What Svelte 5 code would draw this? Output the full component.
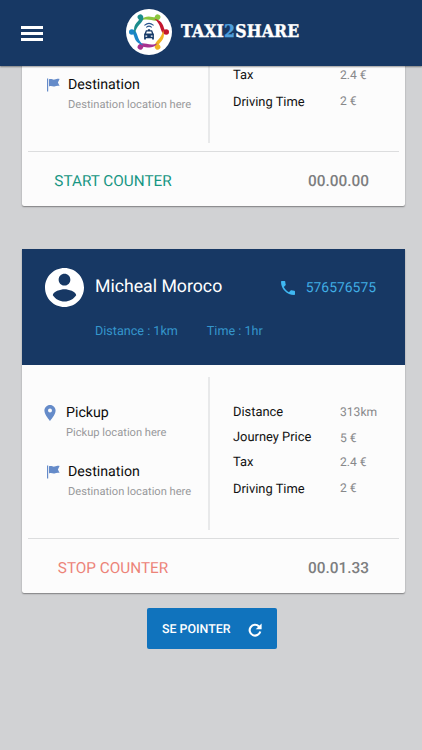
<script>
    const trips = [
        { id: 1, name: 'Micheal Moroco', phone: '576576575', running: false, counter: '00.00.00' },
        { id: 2, name: 'Micheal Moroco', phone: '576576575', running: true, counter: '00.01.33' },
    ];

    const prices = [
        { label: 'Distance', value: '313km' },
        { label: 'Journey Price', value: '5 €' },
        { label: 'Tax', value: '2.4 €' },
        { label: 'Driving Time', value: '2 €' },
    ];

    // one little figure of the logo ring per colour
    const people = ['#8cc63f', '#c4162e', '#f0b323', '#a8328f', '#1b86c8', '#1c8c8c'];
</script>

<div class="screen">
    <header class="topbar">
        <button class="menu" aria-label="Menu"><span></span><span></span><span></span></button>
        <div class="brand">
            <svg class="logo" viewBox="0 0 46 46">
                <circle cx="23" cy="23" r="23" fill="#fff" />
                {#each people as color, i}
                    <g transform="rotate({30 + i * 60} 23 23)" fill={color}>
                        <circle cx="23" cy="5.8" r="2.8" />
                        <path d="M25.4 7.8C22.4 12.4 15.4 10.4 9.8 17.6C11.8 8.2 18.3 9 21.3 7Z" />
                    </g>
                {/each}
                <g fill="none" stroke="#27528c" stroke-width="1.1" stroke-linecap="round">
                    <path d="M18.8 16.1Q23 12.6 27.2 16.1" />
                    <path d="M20.6 18.1Q23 16.1 25.4 18.1" />
                </g>
                <path fill="#173a67" fill-rule="evenodd" d="M21.9 20.2h2.2v1.1h2l1.2 3 .6.8v5.4h-1.8v-1.2h-6.2v1.2h-1.8v-5.4l.6-.8 1.2-3h2zM20.8 22.5l-.7 2h5.8l-.7-2zM19.4 26.4v1.3h1.8v-1.3zM24.8 26.4v1.3h1.8v-1.3z" />
            </svg>
            <div class="wordmark">TAXI<span>2</span>SHARE</div>
        </div>
    </header>

    <main>
        {#each trips as trip (trip.id)}
            <section class="card">
                <div class="card-head">
                    <svg class="avatar" viewBox="2 2 20 20">
                        <path fill="#fff" d="M12 2C6.48 2 2 6.48 2 12s4.48 10 10 10 10-4.48 10-10S17.52 2 12 2zm0 3c1.66 0 3 1.34 3 3s-1.34 3-3 3-3-1.34-3-3 1.34-3 3-3zm0 14.2c-2.5 0-4.71-1.28-6-3.22.03-1.99 4-3.08 6-3.08 1.99 0 5.97 1.09 6 3.08-1.29 1.94-3.5 3.22-6 3.22z" />
                    </svg>
                    <div class="who">
                        <div class="name">{trip.name}</div>
                        <div class="meta"><span>Distance : 1km</span><span>Time : 1hr</span></div>
                    </div>
                    <div class="phone">
                        <svg viewBox="3 3 18 18">
                            <path fill="#3fb8f2" d="M6.62 10.79c1.44 2.83 3.76 5.14 6.59 6.59l2.2-2.2c.27-.27.67-.36 1.02-.24 1.12.37 2.33.57 3.57.57.55 0 1 .45 1 1V20c0 .55-.45 1-1 1-9.39 0-17-7.61-17-17 0-.55.45-1 1-1h3.5c.55 0 1 .45 1 1 0 1.25.2 2.45.57 3.57.11.35.03.74-.25 1.02l-2.2 2.2z" />
                        </svg>
                        <span>{trip.phone}</span>
                    </div>
                </div>

                <div class="card-body">
                    <div class="places">
                        <div class="place pickup">
                            <svg viewBox="5 2 14 20">
                                <path fill="#658bc9" d="M12 2C8.13 2 5 5.13 5 9c0 5.25 7 13 7 13s7-7.75 7-13c0-3.87-3.13-7-7-7zm0 9.5a2.5 2.5 0 0 1 0-5 2.5 2.5 0 0 1 0 5z" />
                            </svg>
                            <div>
                                <h3>Pickup</h3>
                                <p>Pickup location here</p>
                            </div>
                        </div>
                        <div class="place destination">
                            <svg viewBox="0 0 13 14">
                                <path fill="#658bc9" d="M0 .5h1.2v13H0zM2 1.3C4.4 .2 5.6 2 7.6 1.6C9.4 1.3 10.4 .5 12.6 .9L10.9 4.4L12.6 8C10.2 7.5 9 8.2 7.4 8.4C5.4 8.7 4.2 7.3 2 8.5Z" />
                            </svg>
                            <div>
                                <h3>Destination</h3>
                                <p>Destination location here</p>
                            </div>
                        </div>
                    </div>
                    <dl class="prices">
                        {#each prices as row}
                            <div class="price">
                                <dt>{row.label}</dt>
                                <dd>{row.value}</dd>
                            </div>
                        {/each}
                    </dl>
                </div>

                <div class="card-foot">
                    <button class="counter" class:stop={trip.running}>
                        {trip.running ? 'STOP' : 'START'} COUNTER
                    </button>
                    <span class="clock">{trip.counter}</span>
                </div>
            </section>
        {/each}

        <button class="pointer">
            <span>SE POINTER</span>
            <svg viewBox="0 0 14 14">
                <path fill="none" stroke="#fff" stroke-width="2.1" d="M11 3.5A5.4 5.4 0 1 0 12.3 8.5" />
                <path fill="#fff" d="M13.6 .4v5.9H7.7z" />
            </svg>
        </button>
    </main>
</div>

<style>
    :global(body) {
        background: #d1d2d4;
    }

    .screen {
        display: flex;
        flex-direction: column;
        height: 750px;
        overflow: hidden;
        font-family: Roboto, "Liberation Sans", sans-serif;
        text-rendering: geometricPrecision;
        background: #d1d2d4;
    }

    button {
        border: 0;
        padding: 0;
        background: none;
        font-family: inherit;
        text-rendering: inherit;
    }

    .topbar {
        flex: none;
        display: flex;
        align-items: center;
        height: 66px;
        padding: 0 21px;
        box-sizing: border-box;
        background: #173864;
        box-shadow: 0 1px 1.5px rgba(0, 0, 0, 0.4);
        z-index: 1;
    }

    .menu {
        display: flex;
        flex-direction: column;
        gap: 3px;
        width: 22px;
        margin-top: 1px;
    }

    .menu span {
        height: 3px;
        background: #fff;
    }

    .brand {
        display: flex;
        align-items: center;
        gap: 9px;
        margin-left: 83px;
        margin-top: -2px;
    }

    .logo { width: 46px; height: 46px; }

    .wordmark {
        font-family: "DejaVu Serif Condensed", "DejaVu Serif", serif;
        font-stretch: condensed;
        font-weight: bold;
        font-size: 17.4px;
        line-height: 24px;
        letter-spacing: 0.2px;
        color: #fff;
        -webkit-text-stroke: 0.4px;
    }

    .wordmark span { color: #4f9fdc; }

    /* the list is scrolled to its end */
    main {
        flex: 1;
        min-height: 0;
        display: flex;
        flex-direction: column;
        justify-content: flex-end;
        align-items: center;
        overflow: hidden;
        padding: 0 17px 101px 22px;
    }

    .card {
        flex: none;
        width: 383px;
        height: 344px;
        margin-bottom: 43px;
        border-radius: 0 0 2px 2px;
        background: #fcfcfc;
        box-shadow: 0 1px 1.5px rgba(0, 0, 0, 0.4);
    }

    .card:nth-last-child(2) { margin-bottom: 15px; }

    .card-head {
        display: flex;
        height: 116px;
        padding: 19px 28px 0 23px;
        box-sizing: border-box;
        background: #173864;
    }

    .avatar {
        width: 39px;
        height: 39px;
    }

    .who { margin-left: 11px; }

    .name {
        font-size: 17.7px;
        line-height: 39px;
        color: #fff;
    }

    .meta {
        display: flex;
        gap: 29px;
        margin-top: 16px;
        font-size: 12.6px;
        line-height: 18px;
        color: #3596cc;
    }

    .phone {
        display: flex;
        align-items: center;
        gap: 11px;
        height: 40px;
        margin-left: auto;
        margin-right: 1px;
        font-size: 13.9px;
        color: #40aee4;
    }

    .phone svg { width: 14px; height: 14px; }

    .card-body {
        display: flex;
        height: 174px;
        box-sizing: border-box;
        padding: 12px 0 8px;
        margin: 0 6px;
        border-bottom: 1px solid #dcddde;
    }

    .places {
        width: 182px;
        padding: 25px 0 0 16px;
        box-sizing: border-box;
        border-right: 2px solid #e8e9ea;
    }

    .place {
        display: flex;
        height: 59px;
    }

    .pickup svg {
        width: 12px;
        height: 16px;
        margin: 3px 10px 0 0;
    }

    .destination svg {
        width: 13px;
        height: 14px;
        margin: 4px 8px 0 3px;
    }

    h3 {
        margin: 1px 0 0;
        font-size: 14.2px;
        font-weight: 400;
        line-height: 20px;
        color: #0c0c0c;
    }

    p {
        margin: 2px 0 0;
        font-size: 11.13px;
        line-height: 16px;
        color: #98999b;
    }

    .prices {
        margin: 0;
        padding: 23px 0 0 23px;
    }

    .price {
        display: flex;
        height: 25px;
        line-height: 25px;
    }

    .price:last-child { padding-top: 2px; }

    dt {
        width: 107px;
        font-size: 12.9px;
        color: #111;
    }

    dd {
        margin: 0;
        font-size: 12.1px;
        color: #87888a;
    }

    .price:nth-child(2) dd { margin-top: 1px; }
    .price:last-child dd { margin-top: -1px; }

    .card-foot {
        display: flex;
        align-items: center;
        height: 54px;
        padding: 4px 36px 0 0;
        box-sizing: border-box;
    }

    .counter {
        width: 182px;
        font-size: 15.3px;
        color: #179683;
    }

    .counter.stop { color: #ec8378; }

    .clock {
        margin-left: auto;
        font-size: 15.4px;
        font-weight: 500;
        color: #7d7e80;
    }

    .pointer {
        flex: none;
        display: flex;
        align-items: center;
        justify-content: space-between;
        width: 130px;
        height: 41px;
        padding: 2px 15px 0 15px;
        box-sizing: border-box;
        margin-right: 3px;
        border-radius: 2px;
        background: #1073bd;
        font-size: 12.4px;
        font-weight: 500;
        color: #fff;
    }

    .pointer svg { width: 14px; height: 14px; }
</style>
